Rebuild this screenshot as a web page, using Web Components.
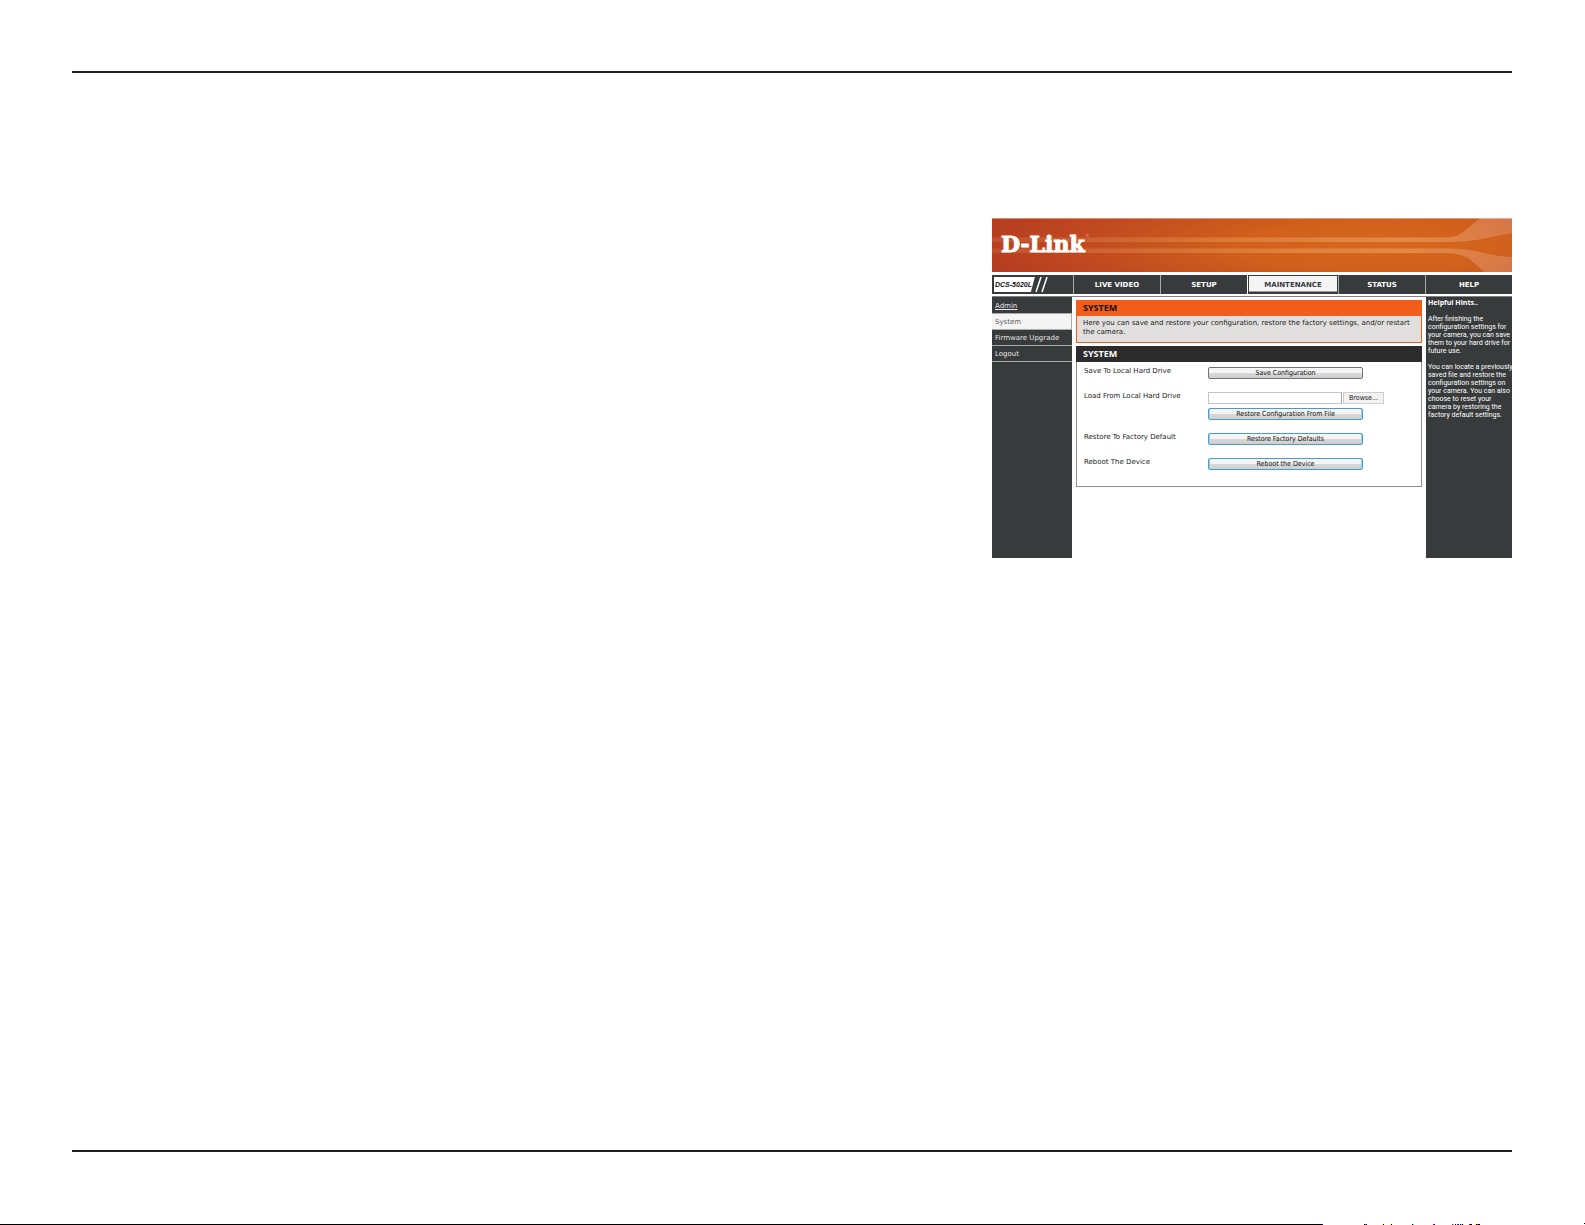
<!DOCTYPE html>
<html lang="en">
<head>
<meta charset="UTF-8">
<title>D-Link DCS-5020L</title>
<style>
    body {
        margin: 0;
        background: #fff;
        font-family: "DejaVu Sans", sans-serif;
    }
</style>
</head>
<body>
<manual-page>
    <camera-app>
        <camera-banner slot="banner"></camera-banner>
        <camera-nav slot="nav"></camera-nav>
        <side-menu slot="menu"></side-menu>
        <info-panel heading="SYSTEM" tone="intro">Here you can save and restore your configuration, restore the factory settings, and/or restart the camera.</info-panel>
        <info-panel heading="SYSTEM" tone="form">
            <system-form></system-form>
        </info-panel>
        <helpful-hints slot="hints"></helpful-hints>
    </camera-app>
</manual-page>

<script>
class ManualPage extends HTMLElement {
    constructor() {
        super();
        this.attachShadow({ mode: 'open' });
        this.shadowRoot.innerHTML = `
            <style>
                :host {
                    display: flex;
                    flex-direction: column;
                    min-height: 100vh;
                    overflow: hidden;
                }
                .sheet {
                    flex: 1;
                    display: grid;
                    grid-template-columns: 23fr 13fr;
                    align-items: start;
                    margin: 71px 73px 72px 72px;
                    padding-top: 145px;
                    border-top: 2px solid #231f20;
                    border-bottom: 2px solid #231f20;
                }
                ::slotted(camera-app) {
                    grid-column: 2;
                }
                svg {
                    display: block;
                    width: 100%;
                    height: 2px;
                    margin-top: -1px;
                }
            </style>
            <div class="sheet"><slot></slot></div>
            <svg viewBox="0 0 1585 2" preserveAspectRatio="none" shape-rendering="crispEdges" aria-hidden="true">
                <path fill="#000" d="M0 1h1322v1H0zM1364 1h1v1h-1zM1383 1h1v1h-1zM1391 1h1v1h-1zM1412 1h1v1h-1zM1455 1h1v1h-1zM1460 1h1v1h-1zM1462 1h1v1h-1zM1470 1h2v1h-2zM1476 1h1v1h-1zM1478 1h2v1h-2zM1584 0h1v1h-1z"/>
                <path fill="#00f" d="M1322 1h1v1h-1zM1366 1h1v1h-1zM1434 1h1v1h-1zM1458 1h1v1h-1z"/>
                <path fill="#ff0" d="M1382 1h1v1h-1zM1390 1h1v1h-1zM1463 1h1v1h-1zM1475 1h1v1h-1z"/>
                <path fill="#0ff" d="M1413 1h1v1h-1zM1453 1h1v1h-1zM1461 1h1v1h-1z"/>
                <path fill="#f00" d="M1433 1h1v1h-1zM1452 1h1v1h-1zM1457 1h1v1h-1zM1469 1h1v1h-1zM1477 1h1v1h-1z"/>
                <path fill="#6a6a20" d="M1365 1h1v1h-1z"/>
            </svg>
        `;
    }
}

class CameraApp extends HTMLElement {
    constructor() {
        super();
        this.attachShadow({ mode: 'open' });
        this.shadowRoot.innerHTML = `
            <style>
                :host {
                    display: block;
                }
                .body {
                    display: grid;
                    grid-template-columns: 80px 1fr 86px;
                    margin-top: 2px;
                    border-top: 1px solid #7f8080;
                    min-height: 261px;
                }
                main {
                    display: flex;
                    flex-direction: column;
                    gap: 3px;
                    padding: 3px 4px;
                }
            </style>
            <slot name="banner"></slot>
            <slot name="nav"></slot>
            <div class="body">
                <slot name="menu"></slot>
                <main><slot></slot></main>
                <slot name="hints"></slot>
            </div>
        `;
    }
}

class CameraBanner extends HTMLElement {
    constructor() {
        super();
        this.attachShadow({ mode: 'open' });
        this.shadowRoot.innerHTML = `
            <style>
                :host {
                    display: grid;
                    height: 54px;
                    background: radial-gradient(ellipse 420px 74px at 75% 52%, #d6681c 0%, #d0601c 35%, #bf4820 75%, #b43c21 100%);
                }
                svg, .logo {
                    grid-area: 1 / 1;
                }
                svg {
                    display: block;
                    width: 100%;
                    height: 54px;
                }
                .logo {
                    display: flex;
                    align-items: flex-start;
                    padding: 12px 9px;
                    color: #fff;
                    font: bold 22px/28px "DejaVu Serif", serif;
                    -webkit-text-stroke: 1px #fff;
                }
                sup {
                    color: #dd8f78;
                    font: 5px/10px "DejaVu Sans", sans-serif;
                    -webkit-text-stroke: 0;
                }
            </style>
            <svg viewBox="0 0 520 54" preserveAspectRatio="none" aria-hidden="true">
                <defs>
                    <linearGradient id="pipe" gradientUnits="userSpaceOnUse" x2="520">
                        <stop offset="0" stop-color="#f0b080" stop-opacity=".15"/>
                        <stop offset=".45" stop-color="#f0a868" stop-opacity=".35"/>
                        <stop offset=".8" stop-color="#f0a868" stop-opacity=".55"/>
                        <stop offset="1" stop-color="#e09070" stop-opacity=".5"/>
                    </linearGradient>
                </defs>
                <path fill="url(#pipe)" d="M0 19.500H455Q465 19.500 474 12Q483 4 488 0H520V15L490 21Q474 24 455 24H0z"/>
                <path fill="url(#pipe)" d="M0 30.500H455Q476 30.500 488 34Q502 38 520 39V54H492Q484 46 476 40Q466 35 455 35H0z"/>
                <path fill="#fff" fill-opacity=".4" d="M0 0h520v1H0z"/>
            </svg>
            <div class="logo">D-Link<sup>®</sup></div>
        `;
    }
}

class CameraNav extends HTMLElement {
    constructor() {
        super();
        this.attachShadow({ mode: 'open' });
        this.shadowRoot.innerHTML = `
            <style>
                nav {
                    display: grid;
                    grid-template-columns: 81px repeat(2, 1fr) 91px repeat(2, 1fr);
                    height: 19px;
                    margin-top: 3px;
                    background: #383b3c;
                }
                .model {
                    display: flex;
                    align-items: center;
                    padding-left: 2px;
                    color: #111;
                }
                .model span {
                    box-sizing: border-box;
                    width: 41px;
                    height: 15px;
                    padding-left: 1px;
                    background: linear-gradient(105deg, #fff 39px, transparent 40px);
                    font: italic bold 7px/15px "Liberation Sans", sans-serif;
                    white-space: nowrap;
                }
                a {
                    display: flex;
                    align-items: center;
                    justify-content: center;
                    border-left: 1px solid #a9abab;
                    color: #fff;
                    font-size: 7px;
                    font-weight: bold;
                    text-decoration: none;
                }
                a[aria-current] {
                    border-left-color: #fff;
                    background: #f4f4f4;
                    box-shadow: inset 0 0 0 1px #383b3c, inset 0 -2px #383b3c, inset 0 -3px #9a9c9c;
                    color: #383b3c;
                }
            </style>
            <nav>
                <div class="model">
                    <span>DCS-5020L</span>
                    <svg width="14" height="15" viewBox="0 0 14 15" stroke="#fff" stroke-width="1.500" aria-hidden="true">
                        <path d="M1 15L6 0M7 15L12 0"/>
                    </svg>
                </div>
                <a href="#live">LIVE VIDEO</a>
                <a href="#setup">SETUP</a>
                <a href="#maintenance" aria-current="page">MAINTENANCE</a>
                <a href="#status">STATUS</a>
                <a href="#help">HELP</a>
            </nav>
        `;
    }
}

class SideMenu extends HTMLElement {
    constructor() {
        super();
        this.attachShadow({ mode: 'open' });
        this.shadowRoot.innerHTML = `
            <style>
                :host {
                    display: block;
                    padding-top: 1px;
                    background: #383b3c;
                }
                a {
                    display: block;
                    padding: 1px 0 0 3px;
                    border-bottom: 1px solid #a9abab;
                    color: #e6e6e6;
                    font-size: 7px;
                    line-height: 14px;
                    text-decoration: none;
                }
                a[href="#admin"] {
                    text-decoration: underline;
                }
                a[aria-current] {
                    border-right: 1px solid #a9abab;
                    background: #f4f4f4;
                    color: #5c5e5f;
                }
            </style>
            <a href="#admin">Admin</a>
            <a href="#system" aria-current="page">System</a>
            <a href="#firmware">Firmware Upgrade</a>
            <a href="#logout">Logout</a>
        `;
    }
}

class InfoPanel extends HTMLElement {
    constructor() {
        super();
        this.attachShadow({ mode: 'open' });
        this.shadowRoot.innerHTML = `
            <style>
                :host {
                    display: block;
                    border: 1px solid #8f9090;
                    background: #fff;
                    color: #222;
                    font-size: 7px;
                    line-height: 9px;
                }
                h2 {
                    margin: -1px -1px 0;
                    padding-left: 7px;
                    background: #2c2c2c;
                    color: #fff;
                    font: bold 9px/16px "Noto Sans", sans-serif;
                }
                :host([tone="intro"]) {
                    border-color: #f35d1b;
                    background: #e0dfdd;
                }
                :host([tone="intro"]) h2 {
                    background: #f35d1b;
                    color: #111;
                }
                :host([tone="intro"]) div {
                    padding: 3px 6px 5px;
                }
            </style>
            <h2></h2>
            <div><slot></slot></div>
        `;
    }

    connectedCallback() {
        this.shadowRoot.querySelector('h2').textContent = this.getAttribute('heading');
    }
}

class SystemForm extends HTMLElement {
    constructor() {
        super();
        this.attachShadow({ mode: 'open' });
        this.shadowRoot.innerHTML = `
            <style>
                form {
                    display: grid;
                    grid-template-columns: 124px 1fr;
                    row-gap: 13px;
                    padding: 5px 7px 16px;
                }
                .field {
                    display: grid;
                    grid-template-columns: 134px 41px;
                    gap: 4px 1px;
                }
                input, button {
                    box-sizing: border-box;
                    height: 12px;
                    margin: 0;
                    padding: 0;
                    font: 7px/9px "DejaVu Sans Condensed", "DejaVu Sans", sans-serif;
                    color: #111;
                }
                input {
                    border: 1px solid #c4c4c4;
                    border-right-color: #a8a8a8;
                    background: #fff;
                }
                button {
                    grid-column: 1 / 3;
                    width: 155px;
                    border: 1px solid #4a9cc6;
                    border-radius: 2px;
                    background: linear-gradient(#f4f4f4 50%, #d8d8d8 51%, #cfcfcf);
                    box-shadow: inset 1px 0 #9fd4ee, inset -1px 0 #9fd4ee;
                }
                button.plain {
                    border-color: #707070;
                    box-shadow: none;
                }
                button.browse {
                    grid-column: 2;
                    width: 41px;
                    border-color: #cfcfcf;
                    border-radius: 0;
                    background: #f2f2f2;
                    box-shadow: none;
                }
            </style>
            <form>
                <label for="save">Save To Local Hard Drive</label>
                <div class="field"><button type="button" id="save" class="plain">Save Configuration</button></div>
                <label for="file">Load From Local Hard Drive</label>
                <div class="field">
                    <input type="text" id="file">
                    <button type="button" class="browse">Browse...</button>
                    <button type="button">Restore Configuration From File</button>
                </div>
                <label for="factory">Restore To Factory Default</label>
                <div class="field"><button type="button" id="factory">Restore Factory Defaults</button></div>
                <label for="reboot">Reboot The Device</label>
                <div class="field"><button type="button" id="reboot">Reboot the Device</button></div>
            </form>
        `;
    }
}

class HelpfulHints extends HTMLElement {
    constructor() {
        super();
        this.attachShadow({ mode: 'open' });
        this.shadowRoot.innerHTML = `
            <style>
                :host {
                    display: block;
                    padding: 2px 0 0 2px;
                    background: #383b3c;
                    color: #fff;
                    font: 7px/8px Roboto, sans-serif;
                    white-space: nowrap;
                }
                h3, p {
                    margin: 0 0 8px;
                }
                h3 {
                    font: bold 7px/8px "Open Sans", sans-serif;
                }
            </style>
            <h3>Helpful Hints..</h3>
            <p>After finishing the<br>configuration settings for<br>your camera, you can save<br>them to your hard drive for<br>future use.</p>
            <p>You can locate a previously<br>saved file and restore the<br>configuration settings on<br>your camera. You can also<br>choose to reset your<br>camera by restoring the<br>factory default settings.</p>
        `;
    }
}

customElements.define('manual-page', ManualPage);
customElements.define('camera-app', CameraApp);
customElements.define('camera-banner', CameraBanner);
customElements.define('camera-nav', CameraNav);
customElements.define('side-menu', SideMenu);
customElements.define('info-panel', InfoPanel);
customElements.define('system-form', SystemForm);
customElements.define('helpful-hints', HelpfulHints);
</script>
</body>
</html>
